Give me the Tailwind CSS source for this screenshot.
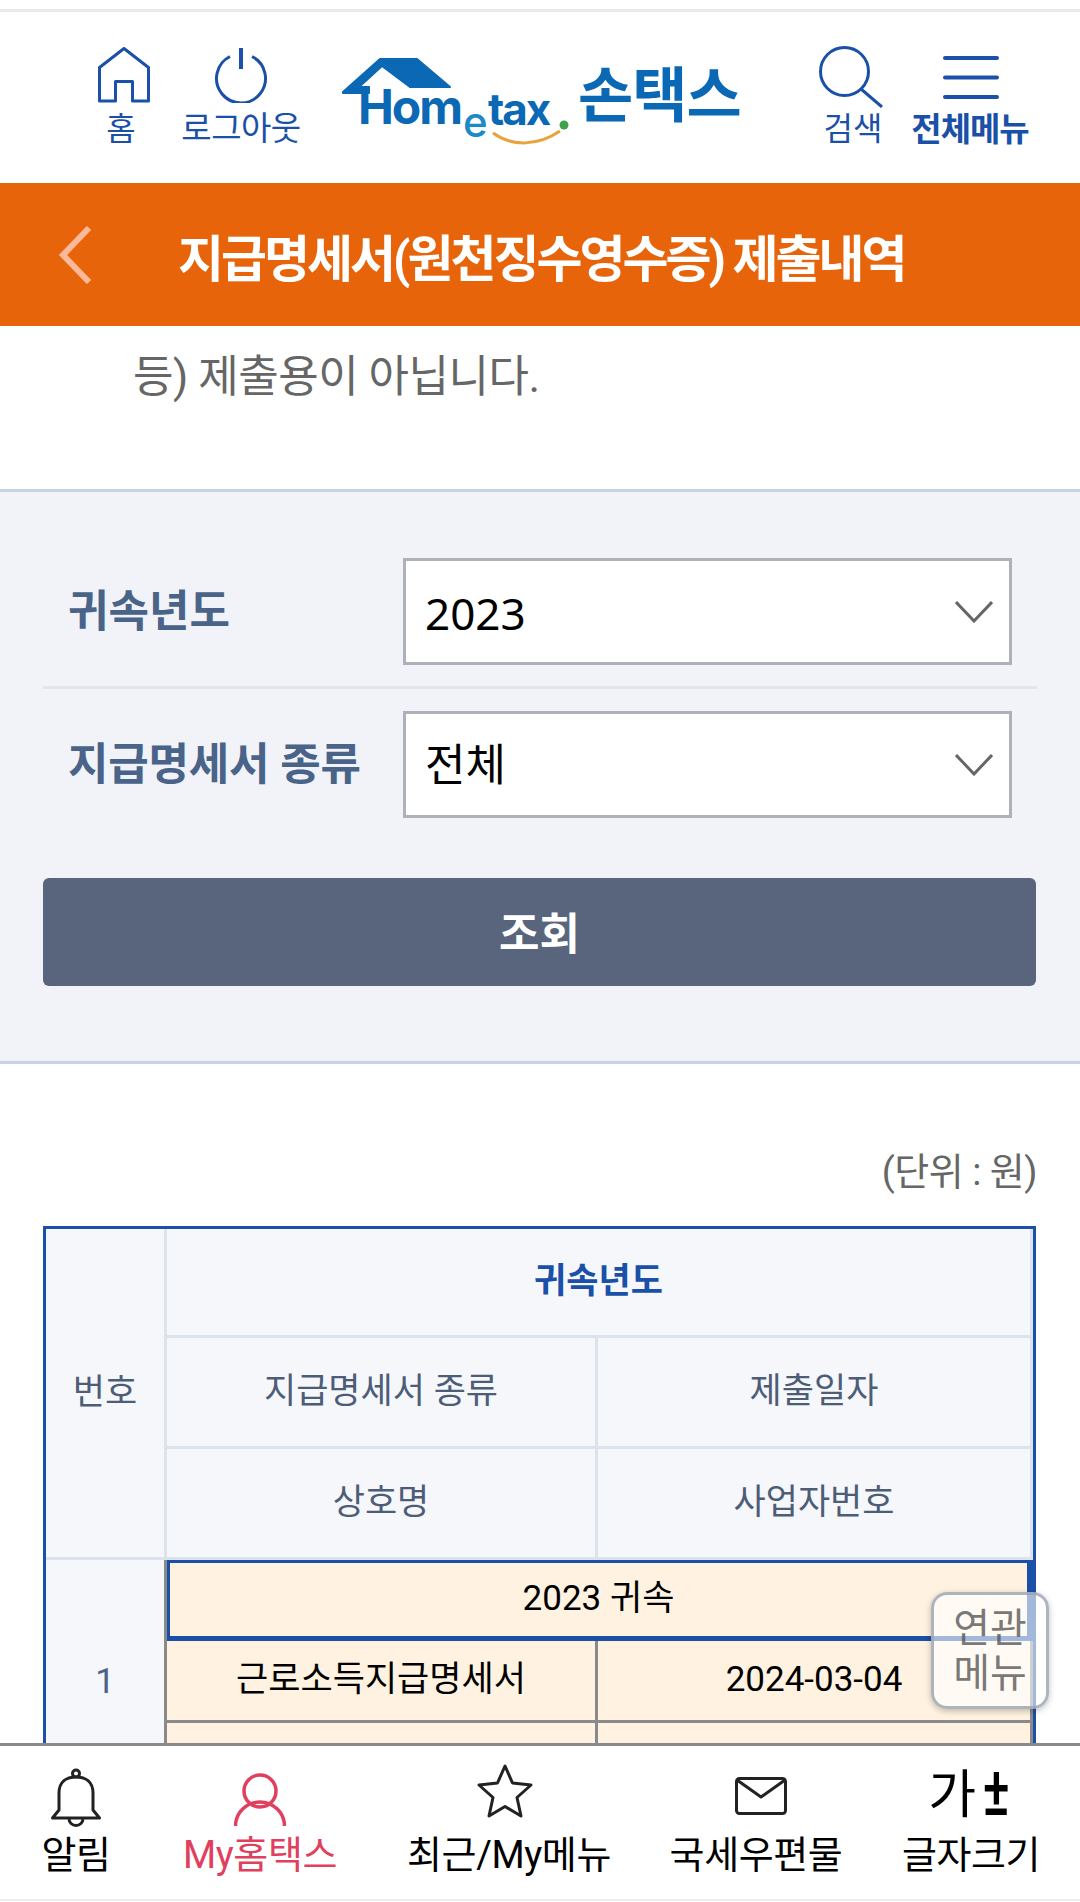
<!DOCTYPE html>
<html lang="ko">
<head>
<meta charset="UTF-8">
<meta name="viewport" content="width=device-width, initial-scale=1.0">
<title>손택스</title>
<script src="https://cdn.jsdelivr.net/npm/@tailwindcss/browser@4"></script>
</head>
<body class="bg-white font-['Roboto','Noto_Sans_CJK_KR',sans-serif]">
<div class="w-[1080px] h-[1902px] flex flex-col overflow-hidden">

  <!-- status strip -->
  <div class="h-[12px] shrink-0 border-b-[3px] border-[#e8e9eb]"></div>

  <!-- header -->
  <header class="h-[171px] shrink-0 flex items-start pt-[34px] pl-[61px] text-[#1a50a8]">
    <a class="w-[120px] flex flex-col items-center">
      <span class="h-[62px] pt-[1px] ml-[6px]">
        <svg class="w-[52px] h-[56px]" viewBox="0 0 52 56" fill="none" stroke="#1a50a8" stroke-width="3" stroke-linejoin="round"><path d="M26 1.5 1.5 20.5V54H17.5V34.5H34.5V54H50.5V20.5Z"/></svg>
      </span>
      <span class="text-[32px] leading-[42px]">홈</span>
    </a>
    <a class="w-[120px] flex flex-col items-center">
      <span class="h-[62px] pt-[1px]">
        <svg class="w-[54px] h-[56px]" viewBox="0 0 54 56" fill="none" stroke="#1a50a8" stroke-width="3"><path d="M16 9.5A24.5 24.5 0 1 0 38 9.5"/><path stroke-width="4" d="M27 1V22"/></svg>
      </span>
      <span class="text-[33px] leading-[42px] whitespace-nowrap tracking-[-0.5px]">로그아웃</span>
    </a>

    <!-- logo -->
    <div class="relative w-[400px] h-[110px] ml-[41px] shrink-0 text-[#0a68b4]">
      <svg class="absolute left-0 top-0 w-[400px] h-[110px]" viewBox="0 0 400 110" fill="none">
        <path d="M1 46 38 13H75L108 41H68L40 20 17 41H27V47H1Z" fill="#0a68b4" stroke="#0a68b4" stroke-width="2" stroke-linejoin="round"/>
        <path d="M151 87C170 101 196 100 218 85" stroke="#eaa33c" stroke-width="3"/>
        <circle cx="222" cy="79" r="4.5" fill="#3fa34d"/>
      </svg>
      <span class="absolute left-[16px] top-[31px] text-[48px] leading-[60px] font-bold tracking-[-2px] font-['Inter','Liberation_Sans',sans-serif]">Hom</span>
      <span class="absolute left-[121px] top-[51px] text-[42px] leading-[50px] font-medium text-[#1c8ac6] font-['Inter','Liberation_Sans',sans-serif]">e</span>
      <span class="absolute left-[146px] top-[38px] text-[44px] leading-[50px] font-bold tracking-[-2px] font-['Inter','Liberation_Sans',sans-serif]">tax</span>
      <span class="absolute left-[236px] top-[16px] text-[60px] leading-[70px] font-bold whitespace-nowrap tracking-[-1px]">손택스</span>
    </div>

    <a class="w-[120px] ml-[49px] flex flex-col items-center">
      <span class="h-[62px]">
        <svg class="w-[64px] h-[62px]" viewBox="0 0 64 62" fill="none" stroke="#1a50a8" stroke-width="3"><circle cx="25.5" cy="25.5" r="24"/><path d="M42 43 63 61"/></svg>
      </span>
      <span class="text-[32px] leading-[42px] ml-[4px]">검색</span>
    </a>
    <a class="w-[120px] flex flex-col items-center">
      <span class="h-[62px]">
        <svg class="w-[56px] h-[62px]" viewBox="0 0 56 62" fill="none" stroke="#1a50a8" stroke-width="4" stroke-linecap="round"><path d="M2 12H54M2 31.500H54M2 51H54"/></svg>
      </span>
      <span class="text-[33px] leading-[44px] font-bold tracking-[-1px] whitespace-nowrap mr-[2px]">전체메뉴</span>
    </a>
  </header>

  <!-- title bar -->
  <div class="h-[143px] shrink-0 bg-[#e7640a] flex items-center">
    <svg class="ml-[58px] w-[34px] h-[58px]" viewBox="0 0 34 58" fill="none" stroke="#fbb99a" stroke-width="6"><path d="M31 2 5 29 31 56"/></svg>
    <h1 class="ml-[86px] mt-[10px] text-[50px] leading-[60px] font-bold text-white tracking-[-3px] whitespace-nowrap">지급명세서(원천징수영수증) 제출내역</h1>
  </div>

  <main class="relative flex-1 overflow-hidden">
    <p class="h-[163px] pl-[133px] pt-[25px] text-[44px] leading-[52px] text-[#666] tracking-[-0.5px]">등) 제출용이 아닙니다.</p>

    <!-- search panel -->
    <section class="bg-[#f1f3f9] border-y-[3px] border-[#c8d3e1] h-[575px] px-[43px] pt-[66px]">
      <div class="flex items-center h-[107px]">
        <label class="w-[360px] pl-[25px] text-[44px] font-bold text-[#4a6388] whitespace-nowrap">귀속년도</label>
        <div class="w-[609px] h-[107px] bg-white border-[3px] border-[#aeb1b8] flex items-center justify-between pl-[19px] pr-[16px] text-[44px] text-black">
          <span class="font-['Noto_Sans',sans-serif] mt-[2px]">2023</span>
          <svg class="w-[38px] h-[22px]" viewBox="0 0 38 22" fill="none" stroke="#666" stroke-width="3"><path d="M1 1 19 20 37 1"/></svg>
        </div>
      </div>
      <div class="h-[3px] mt-[21px] mb-[22px] bg-[#e2e5ee]"></div>
      <div class="flex items-center h-[107px]">
        <label class="w-[360px] pl-[25px] text-[44px] font-bold text-[#4a6388] whitespace-nowrap tracking-[-0.2px]">지급명세서 종류</label>
        <div class="w-[609px] h-[107px] bg-white border-[3px] border-[#aeb1b8] flex items-center justify-between pl-[19px] pr-[16px] text-[44px] text-black">
          <span class="mt-[2px]">전체</span>
          <svg class="w-[38px] h-[22px]" viewBox="0 0 38 22" fill="none" stroke="#666" stroke-width="3"><path d="M1 1 19 20 37 1"/></svg>
        </div>
      </div>
      <button class="w-[993px] h-[108px] mt-[60px] rounded-[6px] bg-[#59657c] text-white text-[44px] font-bold"><span class="relative top-[3px]">조회</span></button>
    </section>

    <p class="pr-[43px] pt-[80px] h-[162px] text-right text-[38px] leading-[56px] text-[#666] tracking-[-0.5px]">(단위 : 원)</p>

    <!-- list table -->
    <table class="ml-[43px] w-[993px] table-fixed border-separate border-spacing-0 border-[3px] border-[#1a50a8] text-[35px] text-center bg-[#f5f7fb]">
      <colgroup><col class="w-[121px]"><col class="w-[431px]"><col></colgroup>
      <thead class="text-[#4d5d78] font-normal">
        <tr class="h-[109px]">
          <th rowspan="3" class="font-normal border-r-[3px] border-b-[3px] border-[#dde3ec]">번호</th>
          <th colspan="2" class="font-bold text-[#1a50a8] border-r-[3px] border-b-[3px] border-[#dde3ec]">귀속년도</th>
        </tr>
        <tr class="h-[111px]">
          <th class="font-normal border-r-[3px] border-b-[3px] border-[#dde3ec]">지급명세서 종류</th>
          <th class="font-normal border-r-[3px] border-b-[3px] border-[#dde3ec]">제출일자</th>
        </tr>
        <tr class="h-[111px]">
          <th class="font-normal border-r-[3px] border-b-[3px] border-[#dde3ec]">상호명</th>
          <th class="font-normal border-r-[3px] border-b-[3px] border-[#dde3ec]">사업자번호</th>
        </tr>
      </thead>
      <tbody class="text-black">
        <tr class="h-[81px]">
          <td rowspan="3" class="text-[#4a6388] bg-[#f5f7fb] border-r-[3px] border-[#8a8a8a]">1</td>
          <td colspan="2" class="bg-[#fff2e0] border-t-[3px] border-l-[3px] border-r-[6px] border-b-[5px] border-[#1a50a8]">2023 귀속</td>
        </tr>
        <tr class="h-[82px] bg-[#fff2e0]">
          <td class="border-r-[3px] border-b-[3px] border-[#8a8a8a]">근로소득지급명세서</td>
          <td class="border-r-[3px] border-b-[3px] border-[#8a8a8a]">2024-03-04</td>
        </tr>
        <tr class="h-[82px] bg-[#fff2e0]">
          <td class="border-r-[3px] border-[#8a8a8a]"></td>
          <td class="border-r-[3px] border-[#8a8a8a]"></td>
        </tr>
      </tbody>
    </table>

    <!-- floating related-menu button -->
    <button class="absolute left-[931px] top-[1266px] w-[118px] h-[117px] rounded-[16px] border-[3px] border-[#9aa3b0]/80 bg-white/60 shadow-[0_2px_6px_rgba(0,0,0,0.25)] text-[40px] leading-[45px] text-[#555]/80">연관<br>메뉴</button>
  </main>

  <!-- bottom nav -->
  <nav class="h-[159px] shrink-0 border-t-[3px] border-[#8a8a8a] flex bg-white text-black text-[38px] tracking-[-0.4px] relative">
    <a class="w-[152px] flex flex-col items-center">
      <span class="h-[86px] pt-[22px]">
        <svg class="w-[52px] h-[60px]" viewBox="0 0 52 60" fill="none" stroke="#222" stroke-width="3" stroke-linejoin="round"><circle cx="26" cy="5.500" r="3.500"/><path d="M2.500 50 9 42V25C9 14 16 9 26 9S43 14 43 25V42L49.500 50Z"/><path d="M19 50.500a7 7 0 0 0 14 0"/></svg>
      </span>
      <span class="leading-[46px] whitespace-nowrap">알림</span>
    </a>
    <a class="w-[216px] flex flex-col items-center text-[#e0405e]">
      <span class="h-[86px] pt-[27px]">
        <svg class="w-[52px] h-[54px]" viewBox="0 0 52 54" fill="none" stroke="#e0405e" stroke-width="3.500"><circle cx="26" cy="18" r="16"/><path d="M1.500 53A24.500 24 0 0 1 50.500 53"/></svg>
      </span>
      <span class="leading-[46px] whitespace-nowrap">My홈택스</span>
    </a>
    <a class="w-[282px] flex flex-col items-center">
      <span class="h-[86px] pt-[18px] mr-[8px]">
        <svg class="w-[56px] h-[54px]" viewBox="0 0 56 54" fill="none" stroke="#222" stroke-width="3" stroke-linejoin="round"><path d="M28 2 35.500 19 54 21 40 33.500 44 52 28 42.500 12 52 16 33.500 2 21 20.500 19Z"/></svg>
      </span>
      <span class="leading-[46px] whitespace-nowrap">최근/My메뉴</span>
    </a>
    <a class="w-[212px] flex flex-col items-center">
      <span class="h-[86px] pt-[31px] ml-[9px]">
        <svg class="w-[52px] h-[38px]" viewBox="0 0 52 38" fill="none" stroke="#222" stroke-width="3" stroke-linejoin="round"><rect x="1.500" y="1.500" width="49" height="35" rx="3"/><path d="M2 3 26 20 50 3"/></svg>
      </span>
      <span class="leading-[46px] whitespace-nowrap">국세우편물</span>
    </a>
    <a class="w-[218px] flex flex-col items-center">
      <span class="h-[86px] pt-[20px] flex items-start leading-[60px] mr-[4px]">
        <span class="text-[52px]">가</span><span class="text-[68px] font-medium inline-block -mt-[4px] scale-x-75 ml-[2px] -mr-[4px]">±</span>
      </span>
      <span class="leading-[46px] whitespace-nowrap">글자크기</span>
    </a>
    <div class="absolute left-0 right-0 bottom-[1px] h-[2px] bg-[#eceded]"></div>
  </nav>
</div>
</body>
</html>
